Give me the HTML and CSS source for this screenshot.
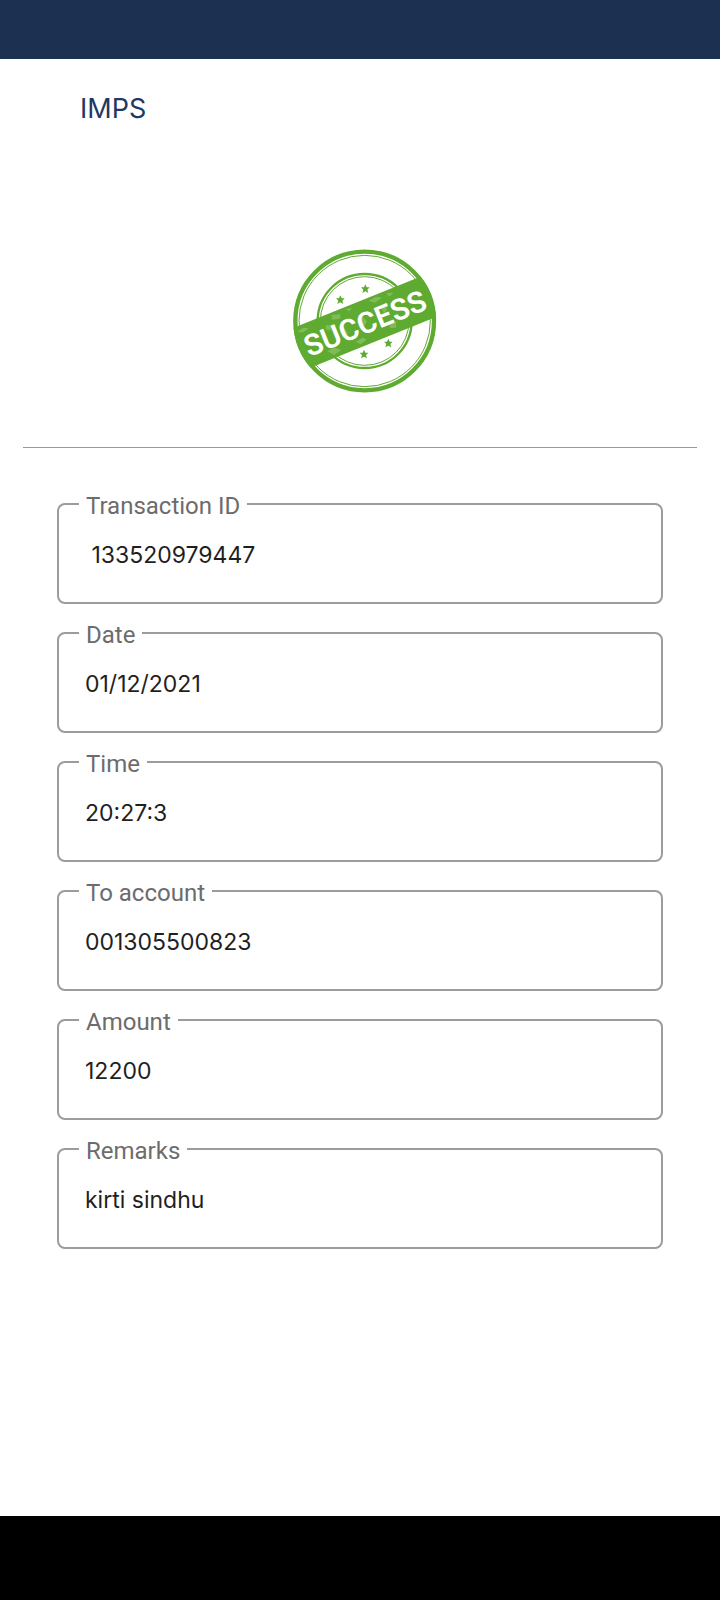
FILE: index.html
```html
<!DOCTYPE html>
<html lang="en">
<head>
    <meta charset="UTF-8">
    <meta name="viewport" content="width=device-width, initial-scale=1.0">
    <title>IMPS</title>
    <link rel="stylesheet" href="styles.css">
</head>
<body>
    <div class="status-bar"></div>
    <header class="toolbar">
        <h1>IMPS</h1>
    </header>
    <main>
        <div class="result">
            <svg class="stamp" viewBox="39 42 432 432" role="img" aria-label="Success">
                <defs>
                    <clipPath id="disc"><circle cx="254" cy="258" r="214"/></clipPath>
                    <path id="star" d="M0-14 4-5 13-5 6 2 9 12 0 7-9 12-6 2-13-5-4-5Z"/>
                </defs>
                <g fill="none" stroke="#5faa30">
                    <circle cx="254" cy="258" r="208" stroke-width="13"/>
                    <circle cx="254" cy="258" r="197" stroke-width="3"/>
                    <circle cx="254" cy="258" r="141" stroke-width="7"/>
                    <circle cx="254" cy="258" r="133" stroke-width="3"/>
                </g>
                <g fill="#5faa30">
                    <use href="#star" x="181" y="195"/>
                    <use href="#star" x="256" y="162"/>
                    <use href="#star" x="325" y="325"/>
                    <use href="#star" x="252" y="358"/>
                </g>
                <g clip-path="url(#disc)">
                    <g transform="rotate(-22 255 262)">
                        <rect x="30" y="197" width="450" height="130" fill="#5faa30"/>
                        <!-- worn ink -->
                        <g fill="#fff" fill-opacity=".2">
                            <path d="M56 212 78 208 92 216 70 220ZM170 204 196 212 190 224 166 218ZM214 202 236 208 224 214ZM288 206 314 203 330 212 306 219ZM348 204 368 212 350 218Z"/>
                            <path d="M142 226 158 232 150 246 138 238ZM176 244 190 250 196 276 182 270ZM236 246 252 238 262 262 246 274ZM316 236 336 230 330 252 318 258ZM118 300 140 296 158 312 132 318ZM208 306 232 302 240 312 218 318ZM322 288 342 294 336 312 318 306Z"/>
                        </g>
                        <text class="stamp-text" x="254" y="296" text-anchor="middle">SUCCESS</text>
                    </g>
                </g>
            </svg>
        </div>
        <hr>
        <form class="details">
            <fieldset class="field">
                <legend><label for="transactionId">Transaction ID</label></legend>
                <input type="text" id="transactionId" value=" 133520979447" readonly>
            </fieldset>
            <fieldset class="field">
                <legend><label for="date">Date</label></legend>
                <input type="text" id="date" value="01/12/2021" readonly>
            </fieldset>
            <fieldset class="field">
                <legend><label for="time">Time</label></legend>
                <input type="text" id="time" value="20:27:3" readonly>
            </fieldset>
            <fieldset class="field">
                <legend><label for="toAccount">To account</label></legend>
                <input type="text" id="toAccount" value="001305500823" readonly>
            </fieldset>
            <fieldset class="field">
                <legend><label for="amount">Amount</label></legend>
                <input type="text" id="amount" value="12200" readonly>
            </fieldset>
            <fieldset class="field">
                <legend><label for="remarks">Remarks</label></legend>
                <input type="text" id="remarks" value="kirti sindhu" readonly>
            </fieldset>
        </form>
    </main>
    <div class="nav-bar"></div>
</body>
</html>
```

FILE: styles.css
```css
* {
    box-sizing: border-box;
}
body {
    margin: 0;
    min-height: 100vh;
    display: flex;
    flex-direction: column;
    background-color: #fff;
    font-family: Roboto, sans-serif;
}
.status-bar {
    height: 59px;
    background-color: #1c3152;
}
.toolbar {
    padding: 32px 80px;
}
.toolbar h1 {
    margin: 0;
    font-family: Inter, sans-serif;
    font-size: 27px;
    line-height: 36px;
    font-weight: 400;
    color: #1f3864;
}
main {
    flex: 1;
}
.result {
    display: flex;
    justify-content: center;
    padding: 90px 0 54px 9px;
}
.stamp {
    width: 144px;
    height: 144px;
}
.stamp-text {
    font-family: Roboto, sans-serif;
    font-size: 89px;
    font-weight: 600;
    fill: #fff;
}
hr {
    height: 1px;
    margin: 0 23px;
    border: 0;
    background-color: #999;
}
.details {
    display: flex;
    flex-direction: column;
    gap: 13px;
    padding: 40px 57px;
}
.field {
    margin: 0;
    min-width: 0;
    padding: 0 20px 12px;
    border: 2px solid #9c9c9c;
    border-radius: 8px;
}
.field legend {
    padding: 4px 7px 0;
    font-size: 24px;
    line-height: 28px;
    color: #6c6c6c;
}
.field input {
    display: block;
    width: 100%;
    height: 70px;
    padding: 0 6px;
    border: 0;
    outline: 0;
    background: none;
    font-family: Inter, sans-serif;
    font-size: 23px;
    color: #1f1f1f;
}
.nav-bar {
    height: 84px;
    background-color: #000;
}
```
